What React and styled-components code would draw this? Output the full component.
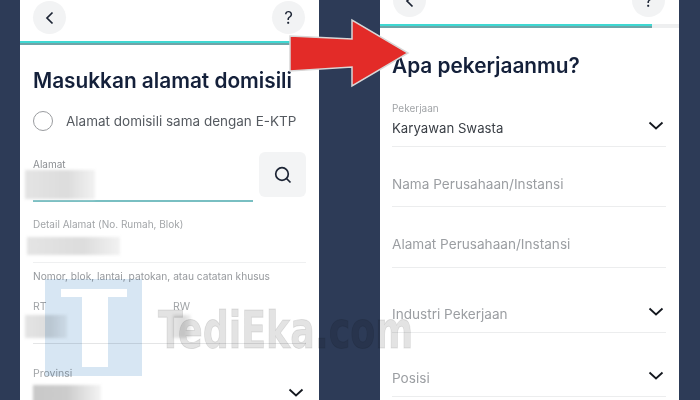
import styled, { createGlobalStyle } from "styled-components";

const GlobalStyle = createGlobalStyle`
  html, body {
    margin: 0;
    padding: 0;
    background: #2d3b57;
  }
  * { box-sizing: border-box; }
`;

const Page = styled.div`
  position: relative;
  width: 700px;
  height: 400px;
  overflow: hidden;
  display: flex;
  gap: 61px;
  padding-left: 20px;
  background: #2d3b57;
  font-family: Inter, "Open Sans", sans-serif;
`;

const Phone = styled.div`
  width: 299px;
  height: 400px;
  overflow: hidden;
  background: #fff;
  padding-top: ${(p) => p.$top}px;
`;

const TopBar = styled.div`
  display: flex;
  justify-content: space-between;
  padding: 0 14px 0 13px;
  height: 34px;
  margin-top: ${(p) => p.$mt || 0}px;
`;

const RoundBtn = styled.div`
  width: 33px;
  height: 33px;
  border-radius: 50%;
  background: #f2f3f4;
  display: flex;
  align-items: center;
  justify-content: center;
  font-size: 17px;
  color: #1c2434;
`;

const Progress = styled.div`
  height: 4px;
  margin-top: 6px;
  background: #eeeff0;
`;

const ProgressFill = styled.div`
  height: 100%;
  background: linear-gradient(#3fd8d2 50%, #6fa5a8 50%);
`;

const Body = styled.div`
  padding: ${(p) => p.$top}px 13px 0 ${(p) => p.$left}px;
`;

const Title = styled.h1`
  margin: 0;
  font-size: ${(p) => p.$size}px;
  line-height: 26px;
  font-weight: 600;
  color: #14203a;
  white-space: nowrap;
`;

const RadioRow = styled.div`
  display: flex;
  align-items: center;
  gap: 13px;
  margin-top: 17px;
  font-size: 13.5px;
  color: #555a60;
  white-space: nowrap;
`;

const Radio = styled.div`
  width: 20px;
  height: 20px;
  border-radius: 50%;
  border: 1.5px solid #9a9c9f;
`;

const SearchRow = styled.div`
  display: flex;
  justify-content: space-between;
  margin-top: 21px;
`;

const SearchBtn = styled.div`
  width: 47px;
  height: 45px;
  border-radius: 6px;
  background: #f3f4f5;
  display: flex;
  align-items: center;
  justify-content: center;
`;

const AddressField = styled.div`
  width: 220px;
  height: 50px;
  padding-top: 6px;
  border-bottom: 2px solid #79bfc2;
`;

const SmallLabel = styled.div`
  font-size: ${(p) => p.$size || 10}px;
  line-height: 12px;
  color: ${(p) => p.$color || "#8b8e92"};
  white-space: nowrap;
`;

const Blur = styled.div`
  width: ${(p) => p.$w}px;
  height: ${(p) => p.$h}px;
  margin-left: ${(p) => p.$left || 0}px;
  margin-top: ${(p) => p.$mt || 0}px;
  background: ${(p) =>
    p.$dark
      ? "linear-gradient(90deg, #c8c8c8, #cccccc 50%, #f4f4f4)"
      : "linear-gradient(90deg, #e4e4e4, #dcdcdc 60%, #f2f2f2)"};
  filter: blur(1.5px);
`;

const DetailField = styled.div`
  margin-top: 16px;
  padding-bottom: 7px;
  border-bottom: 1px solid #eff0f1;
`;

const Hint = styled.div`
  margin-top: 7px;
  font-size: 10.2px;
  line-height: 12px;
  color: #96999d;
  white-space: nowrap;
`;

const RtGrid = styled.div`
  display: grid;
  grid-template-columns: 140px 1fr;
  margin-top: 19px;
  padding-bottom: 5px;
  border-bottom: 1px solid #e4e5e6;
`;

const ProvinceRow = styled.div`
  display: flex;
  justify-content: space-between;
  margin-top: 24px;
`;

const Field = styled.div`
  display: flex;
  align-items: flex-end;
  justify-content: space-between;
  height: ${(p) => p.$h}px;
  padding-bottom: ${(p) => p.$pb}px;
  border-bottom: 1px solid #ecedee;
`;

const Placeholder = styled.div`
  font-size: 13.6px;
  line-height: 18px;
  color: #9b9ea2;
  white-space: nowrap;
`;

const Value = styled.div`
  font-size: 13.2px;
  line-height: 18px;
  margin-top: 5px;
  color: #3a3f46;
`;

const ChevronIcon = styled.svg`
  display: block;
  margin: ${(p) => p.$mt || 0}px 2px ${(p) => p.$mb || 0}px 0;
`;

const Arrow = styled.svg`
  position: absolute;
  left: 284px;
  top: 18px;
`;

const Logo = styled.div`
  position: absolute;
  left: 45px;
  top: 279px;
  width: 97px;
  height: 97px;
  background: #d7e6f3;
  display: flex;
  justify-content: center;
  mix-blend-mode: multiply;
`;

const LogoT = styled.svg`
  margin-top: 10px;
`;

const Watermark = styled.div`
  position: absolute;
  left: 158px;
  top: 301px;
  font-family: "DejaVu Sans", sans-serif;
  font-size: 52px;
  line-height: 58px;
  font-weight: 700;
  transform-origin: left top;
  transform: scaleX(0.7);
  color: rgba(0, 0, 0, 0.11);
  -webkit-text-stroke: 1px rgba(0, 0, 0, 0.11);
  paint-order: stroke fill;
  white-space: nowrap;
  filter: blur(0.6px);
`;

const Chevron = ({ mt, mb }) => (
  <ChevronIcon $mt={mt} $mb={mb} width="16" height="9" viewBox="0 0 16 9">
    <path d="M1.500 1.500 8 7.500l6.500-6" fill="none" stroke="#14181f" strokeWidth="1.800" />
  </ChevronIcon>
);

const BackIcon = () => (
  <svg width="10" height="14" viewBox="0 0 10 14">
    <path d="M7.500 1.500 2 7l5.500 5.500" fill="none" stroke="#1c2434" strokeWidth="1.700" />
  </svg>
);

const SearchIcon = () => (
  <svg width="18" height="18" viewBox="0 0 18 18" fill="none" stroke="#1c2434" strokeWidth="1.700">
    <circle cx="8" cy="8" r="6.300" />
    <path d="m12.500 12.500 4 4" />
  </svg>
);

const AddressScreen = () => (
  <Phone $top={1}>
    <TopBar>
      <RoundBtn><BackIcon /></RoundBtn>
      <RoundBtn>?</RoundBtn>
    </TopBar>
    <Progress><ProgressFill style={{ width: "100%" }} /></Progress>
    <Body $top={23} $left={13}>
      <Title $size={20.8}>Masukkan alamat domisili</Title>
      <RadioRow><Radio />Alamat domisili sama dengan E-KTP</RadioRow>
      <SearchRow>
        <AddressField>
          <SmallLabel>Alamat</SmallLabel>
          <Blur $w={70} $h={29} $left={-8} />
        </AddressField>
        <SearchBtn><SearchIcon /></SearchBtn>
      </SearchRow>
      <DetailField>
        <SmallLabel $color="#a2a5a8">Detail Alamat (No. Rumah, Blok)</SmallLabel>
        <Blur $w={93} $h={18} $left={-6} $mt={7} />
      </DetailField>
      <Hint>Nomor, blok, lantai, patokan, atau catatan khusus</Hint>
      <RtGrid>
        <div>
          <SmallLabel $size={10.500} $color="#a2a5a8">RT</SmallLabel>
          <Blur $w={42} $h={23} $left={-8} $mt={2} />
        </div>
        <div>
          <SmallLabel $size={10.500} $color="#a2a5a8">RW</SmallLabel>
          <Blur $w={18} $h={23} $mt={2} />
        </div>
      </RtGrid>
      <ProvinceRow>
        <div>
          <SmallLabel $size={10.500} $color="#a2a5a8">Provinsi</SmallLabel>
          <Blur $w={68} $h={22} $mt={5} $dark />
        </div>
        <Chevron mt={20} />
      </ProvinceRow>
    </Body>
  </Phone>
);

const JobScreen = () => (
  <Phone $top={0}>
    <TopBar $mt={-16}>
      <RoundBtn><BackIcon /></RoundBtn>
      <RoundBtn>?</RoundBtn>
    </TopBar>
    <Progress><ProgressFill style={{ width: "91%" }} /></Progress>
    <Body $top={25} $left={12}>
      <Title $size={20.800}>Apa pekerjaanmu?</Title>
      <Field $h={68} $pb={9}>
        <div>
          <SmallLabel $color="#a2a5a8">Pekerjaan</SmallLabel>
          <Value>Karyawan Swasta</Value>
        </div>
        <Chevron mb={7} />
      </Field>
      <Field $h={60} $pb={13}><Placeholder>Nama Perusahaan/Instansi</Placeholder></Field>
      <Field $h={61} $pb={14}><Placeholder>Alamat Perusahaan/Instansi</Placeholder></Field>
      <Field $h={65} $pb={9}>
        <Placeholder>Industri Pekerjaan</Placeholder>
        <Chevron mb={7} />
      </Field>
      <Field $h={64} $pb={9}>
        <Placeholder>Posisi</Placeholder>
        <Chevron mb={7} />
      </Field>
    </Body>
  </Phone>
);

export default function App() {
  return (
    <Page>
      <GlobalStyle />
      <AddressScreen />
      <JobScreen />
      <Logo>
        <LogoT width="66" height="78" viewBox="0 0 66 78">
          <path d="M0 0h66v8H47v70H21V8H0z" fill="#fff" />
        </LogoT>
      </Logo>
      <Watermark>TediEka.com</Watermark>
      <Arrow width="126" height="70" viewBox="0 0 126 70">
        <path d="M6 18l62 3V2l56 33-56 33V49L6 53z" fill="#e32b28" stroke="#d8d8d8" strokeWidth="1.500" />
      </Arrow>
    </Page>
  );
}
